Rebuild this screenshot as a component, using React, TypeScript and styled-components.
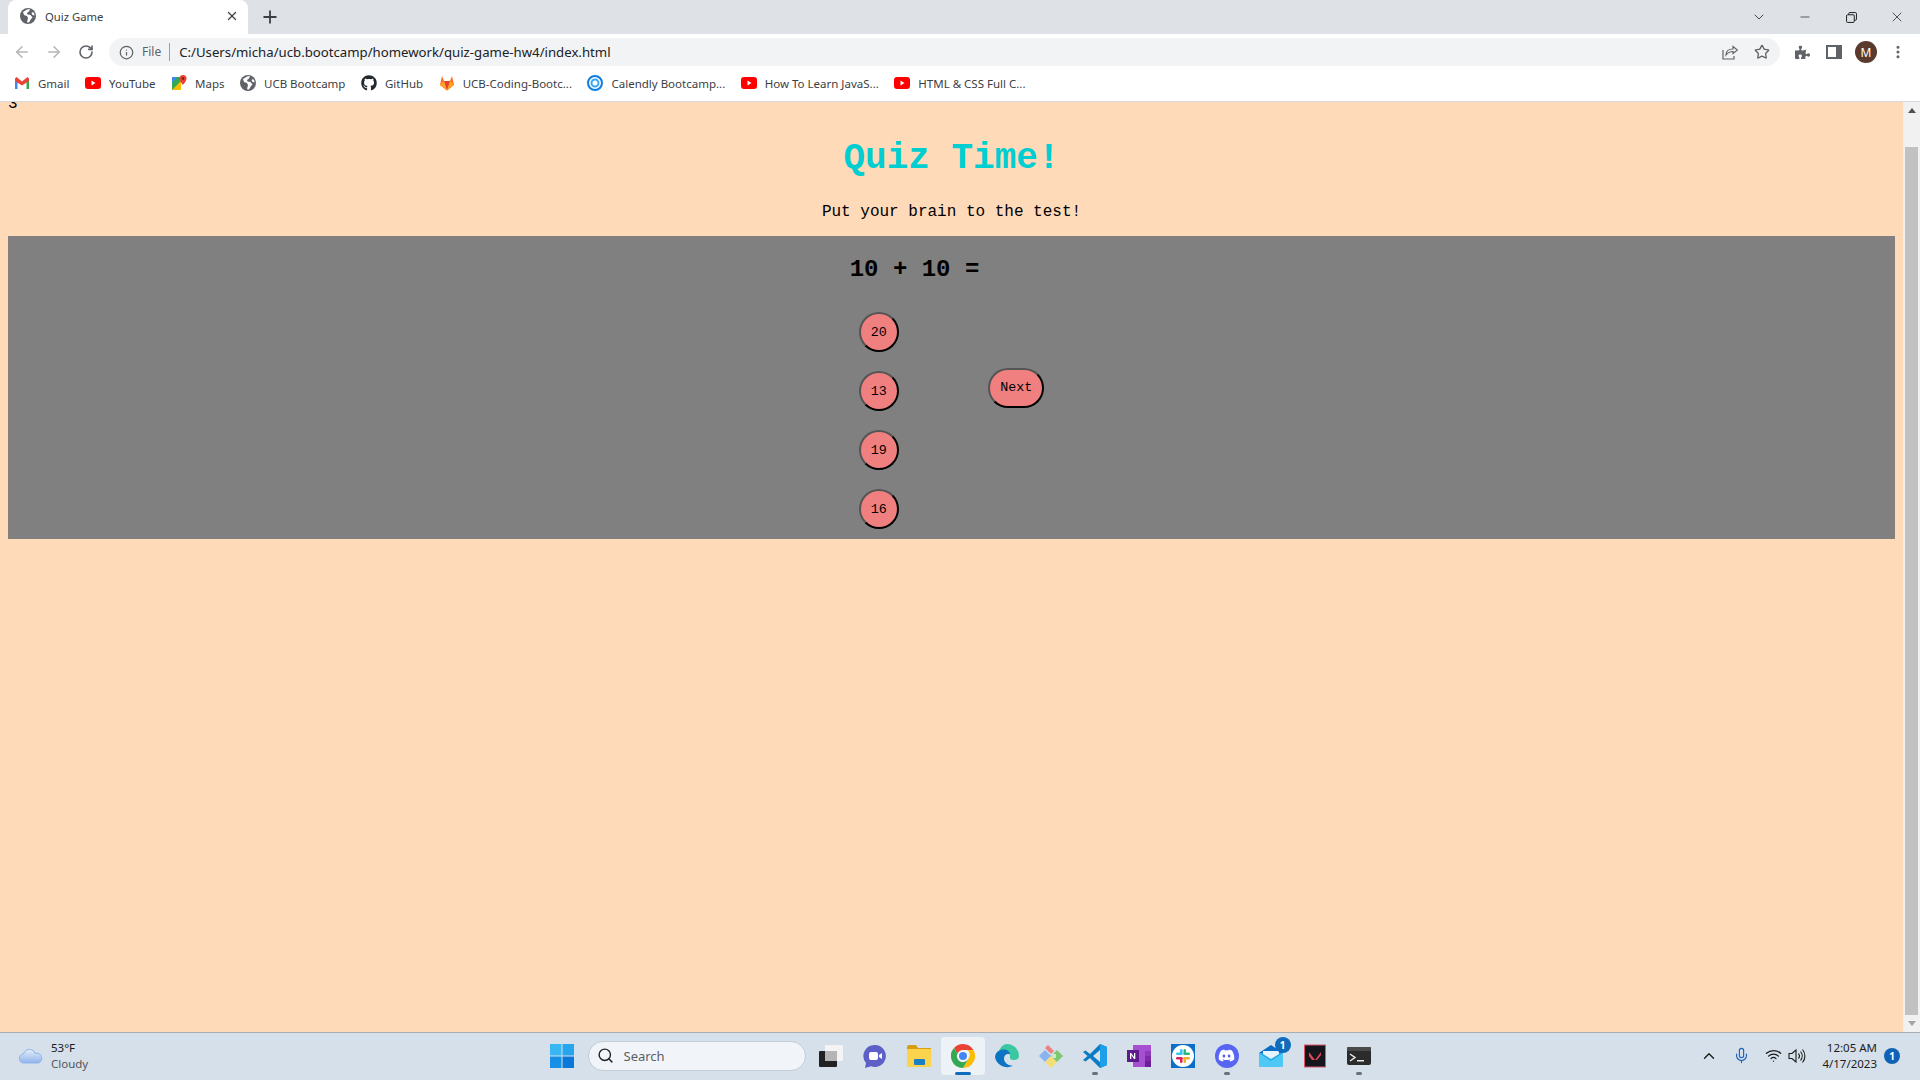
import React from 'react';
import styled, { createGlobalStyle } from 'styled-components';
import {
    ArrowLeft,
    ArrowRight,
    ChevronDown,
    ChevronUp,
    Info,
    Mic,
    Minus,
    MoreVertical,
    Plus,
    RotateCw,
    Search,
    Star,
    Wifi,
    X,
} from 'lucide-react';
import { FaDiscord, FaGithub, FaPuzzlePiece } from 'react-icons/fa';

const UI_FONT = '"Noto Sans", "Open Sans", sans-serif';
const MONO_FONT = '"Liberation Mono", monospace';

const GlobalStyle = createGlobalStyle`
    html, body {
        margin: 0;
        padding: 0;
        height: 100%;
        overflow: hidden;
    }
    * {
        box-sizing: border-box;
    }
`;

const Screen = styled.div`
    width: 1920px;
    height: 1080px;
    display: flex;
    flex-direction: column;
    overflow: hidden;
    font-family: ${UI_FONT};
`;

const TabStrip = styled.div`
    height: 34px;
    flex: none;
    display: flex;
    align-items: flex-end;
    padding-left: 8px;
    background: #dee1e6;
`;

const ActiveTab = styled.div`
    width: 240px;
    height: 34px;
    display: flex;
    align-items: center;
    gap: 9px;
    padding: 0 9px 2px 12px;
    background: #fff;
    border-radius: 8px 8px 0 0;
    color: #3c4043;
    font-size: 11.3px;
`;

const TabTitle = styled.span`
    flex: 1;
`;

const NewTab = styled.div`
    width: 36px;
    height: 34px;
    margin-left: 4px;
    display: flex;
    align-items: center;
    justify-content: center;
    color: #3c4043;
`;

const WindowControls = styled.div`
    margin-left: auto;
    height: 34px;
    display: flex;
    align-items: center;
    color: #1f1f1f;
`;

const WindowButton = styled.div`
    width: 46px;
    display: flex;
    justify-content: center;
`;

const Toolbar = styled.div`
    height: 38px;
    flex: none;
    display: flex;
    align-items: center;
    padding: 0 0 2px 6px;
    background: #fff;
`;

const NavButton = styled.div<{ $off?: boolean }>`
    width: 32px;
    display: flex;
    justify-content: center;
    color: ${(props) => (props.$off ? '#b4b6b9' : '#5f6368')};
`;

const AddressBar = styled.div`
    width: 1671px;
    height: 28px;
    margin-left: 7px;
    display: flex;
    align-items: center;
    padding: 0 2px 0 10px;
    border-radius: 14px;
    background: #f1f3f4;
    color: #5f6368;
    font-size: 12px;
`;

const SiteLabel = styled.span`
    margin-left: 8px;
    padding-right: 8px;
    border-right: 1px solid #9aa0a6;
    line-height: 18px;
`;

const UrlText = styled.span`
    margin-left: 9px;
    flex: 1;
    color: #202124;
    font-size: 13.2px;
`;

const AddressIcon = styled.div`
    width: 32px;
    display: flex;
    justify-content: center;
    color: #5f6368;
`;

const ToolbarEnd = styled.div`
    display: flex;
    align-items: center;
    margin-left: 6px;
    color: #5f6368;
`;

const ToolbarIcon = styled.div`
    width: 32px;
    display: flex;
    justify-content: center;
`;

const Avatar = styled.div`
    width: 22px;
    height: 22px;
    margin: 0 5px;
    display: flex;
    align-items: center;
    justify-content: center;
    border-radius: 50%;
    background: #5b3a2e;
    color: #fff;
    font-size: 12px;
`;

const BookmarkBar = styled.div`
    height: 30px;
    flex: none;
    display: flex;
    align-items: center;
    gap: 15.5px;
    padding: 0 0 7px 14px;
    background: #fff;
    border-bottom: 1px solid #d6d9df;
`;

const Bookmark = styled.div`
    display: flex;
    align-items: center;
    gap: 8px;
    color: #3c4043;
    font-size: 11.5px;
    white-space: nowrap;
`;

const Viewport = styled.div`
    flex: 1;
    min-height: 0;
    display: flex;
`;

const Page = styled.main`
    flex: 1;
    min-width: 0;
    overflow: hidden;
    background: #ffdab9;
    font-family: ${MONO_FONT};
    color: #000;
    text-align: center;
`;

// the page is scrolled a little, only the foot of the counter is left in view
const Timer = styled.div`
    height: 6px;
    padding-left: 8px;
    overflow: hidden;
    text-align: left;
    font-size: 16px;
    line-height: 4px;
`;

const Title = styled.h1`
    margin: 30px 0 0;
    color: #00ced1;
    font-size: 36px;
    line-height: 41px;
`;

const Tagline = styled.p`
    margin: 24px 0 0;
    font-size: 16px;
    line-height: 18px;
`;

const QuizPanel = styled.section`
    margin: 15px 8px 0;
    display: flex;
    justify-content: center;
    align-items: center;
    background: #808080;
`;

const QuestionColumn = styled.div`
    padding-bottom: 10px;
`;

const Question = styled.h2`
    margin: 20px 0;
    font-size: 24px;
    line-height: 27px;
`;

const Answers = styled.div`
    display: flex;
    flex-direction: column;
    align-items: flex-start;
    gap: 19px;
    margin: 29px 0 0 9px;
`;

const PillButton = styled.button<{ $wide?: boolean }>`
    height: 40px;
    width: ${(props) => (props.$wide ? '56px' : '40px')};
    margin: ${(props) => (props.$wide ? '0 9px' : '0')};
    padding: 0;
    border: 2px outset #000;
    border-radius: 20px;
    background: #f08080;
    color: #000;
    font-family: ${MONO_FONT};
    font-size: 13.33px;
`;

const Scrollbar = styled.div`
    width: 17px;
    flex: none;
    display: flex;
    flex-direction: column;
    background: #f1f1f1;
`;

const ScrollArrow = styled.div`
    height: 17px;
    flex: none;
    display: flex;
    align-items: center;
    justify-content: center;
`;

const ScrollTrack = styled.div`
    flex: 1;
    padding: 28px 2px 0;
`;

const ScrollThumb = styled.div`
    height: 100%;
    background: #c1c1c1;
`;

const Taskbar = styled.footer`
    height: 48px;
    flex: none;
    display: grid;
    grid-template-columns: 1fr auto 1fr;
    align-items: center;
    padding-bottom: 2px;
    background: #d5e0ea;
    border-top: 1px solid #a9adb1;
`;

const Weather = styled.div`
    display: flex;
    align-items: center;
    gap: 8px;
    padding-left: 19px;
`;

const WeatherText = styled.div`
    font-size: 11.5px;
    line-height: 16px;
    color: #1b1b1b;
`;

const WeatherSub = styled.div`
    color: #555;
`;

const TaskCenter = styled.div`
    display: flex;
    align-items: center;
`;

const TaskSlot = styled.div<{ $active?: boolean }>`
    position: relative;
    width: 44px;
    height: 38px;
    display: flex;
    align-items: center;
    justify-content: center;
    border-radius: 4px;
    background: ${(props) => (props.$active ? '#edf2f7' : 'transparent')};
`;

const RunDot = styled.span<{ $active?: boolean }>`
    position: absolute;
    left: 50%;
    bottom: 0;
    width: ${(props) => (props.$active ? '16px' : '6px')};
    height: 3px;
    margin-left: ${(props) => (props.$active ? '-8px' : '-3px')};
    border-radius: 2px;
    background: ${(props) => (props.$active ? '#0f6cbd' : '#6b7075')};
`;

const SearchBox = styled.div`
    width: 218px;
    height: 30px;
    margin: 0 3px 0 4px;
    display: flex;
    align-items: center;
    gap: 9.5px;
    padding-left: 8.5px;
    border-radius: 15px;
    border: 1px solid #c3ccd4;
    background: #f1f5f9;
    color: #5c5f62;
    font-size: 13px;
`;

const MailBadge = styled.span`
    position: absolute;
    top: 0;
    right: 2px;
    width: 16px;
    height: 16px;
    display: flex;
    align-items: center;
    justify-content: center;
    border-radius: 50%;
    background: #0f6cbd;
    color: #fff;
    font-size: 10px;
    font-weight: 700;
`;

const Tray = styled.div`
    display: flex;
    align-items: center;
    justify-content: flex-end;
    color: #1c1c1c;
`;

const TrayIcon = styled.div<{ $width: number; $blue?: boolean }>`
    width: ${(props) => props.$width}px;
    display: flex;
    justify-content: center;
    color: ${(props) => (props.$blue ? '#1f62b8' : '#1c1c1c')};
`;

const Clock = styled.div`
    margin-left: 13px;
    text-align: right;
    font-size: 11.5px;
    line-height: 16px;
`;

const NoticeBadge = styled.div`
    width: 16px;
    height: 16px;
    margin: 0 20px 0 7px;
    display: flex;
    align-items: center;
    justify-content: center;
    border-radius: 50%;
    background: #0f62b5;
    color: #fff;
    font-size: 10px;
    font-weight: 700;
`;

const GlobeIcon = () => (
    <svg width="16" height="16" viewBox="0 0 16 16">
        <circle cx="8" cy="8" r="8" fill="#5f6368" />
        <path
            d="M7 1.500 3 4l1 3 3 1 1 2-1 4.300 2 .2 2-3.500 1.500-1.500-2-2.500-3-.5-.5-1.500 2-1.500 1-2.500zM13 4l-1.500 1 1 2 2 .5-.2-2z"
            fill="#fff"
        />
    </svg>
);

const GmailIcon = () => (
    <svg width="16" height="16" viewBox="0 0 16 16">
        <path d="M1 3.500V14h2.500V6.500z" fill="#4285f4" />
        <path d="M15 3.500V14h-2.500V6.500z" fill="#34a853" />
        <path d="M1 3.500 2.500 2 8 6.500 13.500 2 15 3.500V6L8 10.500 1 6z" fill="#ea4335" />
    </svg>
);

const YouTubeIcon = () => (
    <svg width="16" height="16" viewBox="0 0 16 16">
        <rect y="2" width="16" height="12" rx="3" fill="#f00" />
        <path d="m6.500 5.500 4 2.500-4 2.500z" fill="#fff" />
    </svg>
);

const MapsIcon = () => (
    <svg width="16" height="16" viewBox="0 0 16 16">
        <path d="M1 2h9v13H1z" fill="#34a853" />
        <path d="M1 15 10 6v9z" fill="#fbbc04" />
        <path d="M1 2h5L1 8z" fill="#4285f4" />
        <path d="M12 0a3.500 3.500 0 0 1 3.500 3.500C15.500 6 12 10 12 10S8.500 6 8.500 3.500A3.500 3.500 0 0 1 12 0z" fill="#ea4335" />
        <circle cx="12" cy="3.500" r="1.200" fill="#7c1a12" />
    </svg>
);

const GitlabIcon = () => (
    <svg width="16" height="16" viewBox="0 0 16 16">
        <path d="M8 15.500 1 10 3 1l2 5h6l2-5 2 9z" fill="#fc6d26" />
        <path d="M5 6h6l-3 9.500z" fill="#e24329" />
        <path d="M1 10 5 6l3 9.500zM15 10l-4-4-3 9.500z" fill="#fca326" />
    </svg>
);

const CalendlyIcon = () => (
    <svg width="16" height="16" viewBox="0 0 16 16">
        <circle cx="8" cy="8" r="7" fill="none" stroke="#0b7de0" strokeWidth="2" />
        <circle cx="8" cy="8" r="3.500" fill="none" stroke="#39a7f5" strokeWidth="2" />
    </svg>
);

const CloudIcon = () => (
    <svg width="24" height="18" viewBox="0 0 24 18">
        <defs>
            <linearGradient id="cloud" x1="0" y1="0" x2="0" y2="1">
                <stop offset="0" stopColor="#e6eefa" />
                <stop offset="1" stopColor="#8fb4ec" />
            </linearGradient>
        </defs>
        <path
            d="M5 16a4.500 4.500 0 0 1-.5-9 6 6 0 0 1 7-4.500A5 5 0 0 1 16 6.500 5 5 0 0 1 19.500 16z"
            fill="url(#cloud)"
            stroke="#8fb4ec"
            strokeWidth="1"
        />
    </svg>
);

const WindowsIcon = () => (
    <svg width="24" height="24" viewBox="0 0 24 24">
        <rect width="11.500" height="11.500" fill="#39b7f5" />
        <rect x="12.500" width="11.500" height="11.500" fill="#26a4ec" />
        <rect y="12.500" width="11.500" height="11.500" fill="#1590e4" />
        <rect x="12.500" y="12.500" width="11.500" height="11.500" fill="#0a78d6" />
    </svg>
);

const TaskViewIcon = () => (
    <svg width="24" height="24" viewBox="0 0 24 24">
        <rect x="0" y="7" width="18" height="16" rx="1" fill="#222" />
        <rect x="6" y="1" width="18" height="16" rx="1" fill="#f4f4f4" />
        <rect x="6" y="7" width="12" height="10" fill="#b5b5b5" />
    </svg>
);

const ZoomIcon = () => (
    <svg width="24" height="24" viewBox="0 0 24 24">
        <path d="M12 1a11 11 0 1 1-4 21.300L2 24l1-5A11 11 0 0 1 12 1z" fill="#5f5fc8" />
        <rect x="6" y="8" width="9" height="8" rx="2" fill="#fff" />
        <path d="m16 11 3-2v6l-3-2z" fill="#fff" />
    </svg>
);

const ExplorerIcon = () => (
    <svg width="24" height="22" viewBox="0 0 24 22">
        <path d="M0 2a2 2 0 0 1 2-2h7l2 3h13v6H0z" fill="#d99e0e" />
        <path d="M0 4h24v18H0z" fill="#fcd34d" />
        <rect x="7" y="14" width="11" height="6" rx="1" fill="#1a7fc4" />
    </svg>
);

const ChromeIcon = () => (
    <svg width="24" height="24" viewBox="0 0 24 24">
        <path d="M12 0a12 12 0 0 1 10.400 6H12a6 6 0 0 0-5.600 3.800L3 4a12 12 0 0 1 9-4z" fill="#ea4335" />
        <path d="M22.400 6A12 12 0 0 1 12 24l5.200-9a6 6 0 0 0-1-9z" fill="#fbbc04" />
        <path d="M3 4a12 12 0 0 0 9 20l5.200-9a6 6 0 0 1-10.800-5.200z" fill="#34a853" />
        <circle cx="12" cy="12" r="5" fill="#fff" />
        <circle cx="12" cy="12" r="4" fill="#4285f4" />
    </svg>
);

const EdgeIcon = () => (
    <svg width="24" height="24" viewBox="0 0 24 24">
        <path d="M12 0a12 12 0 0 1 12 12c0 3-3 4.500-6 4-3-.5-3.500-2-3-3.500.5-2-1-4-4-4-4 0-7 3-8 6-1-6 3-14.500 9-14.500z" fill="#3bc7a0" />
        <path d="M0 13C.5 7 6 5 10 5.500c3 .5 5 2.500 5 5-3-1.500-6 .5-6 4 0 4 4 7.500 9 7A12 12 0 0 1 0 13z" fill="#0c74c4" />
    </svg>
);

const GitKrakenIcon = () => (
    <svg width="24" height="24" viewBox="0 0 24 24">
        <path d="m0 12 6-6 6 6-6 6z" fill="#8ab4f0" />
        <path d="m6 18 6-6 6 6-6 6z" fill="#f5de7a" />
        <path d="m12 12 6-6 6 6-6 6z" fill="#7ec870" />
        <path d="m6 4 3-3 6 6-3 3z" fill="#ef8080" />
        <rect x="13" y="10" width="4" height="4" fill="#fff" opacity="0.6" />
    </svg>
);

const VsCodeIcon = () => (
    <svg width="24" height="24" viewBox="0 0 24 24">
        <path d="M17 0 7 10 2.500 6.500 0 8l4.500 4L0 16l2.500 1.500L7 14l10 10 7-3V3z" fill="#0a7cc4" />
        <path d="M17 0v24l7-3V3z" fill="#1f9fe8" />
        <path d="m17 6-7 6 7 6z" fill="#d5e0ea" />
    </svg>
);

const OneNoteIcon = () => (
    <svg width="24" height="24" viewBox="0 0 24 24">
        <rect x="6" y="1" width="18" height="22" fill="#a64fd0" />
        <rect x="18" y="7" width="6" height="5" fill="#8d3bb8" />
        <rect x="18" y="12" width="6" height="5" fill="#7b2ba5" />
        <rect x="18" y="17" width="6" height="6" fill="#6b1f96" />
        <rect y="6" width="12" height="12" fill="#5c1a8a" />
        <path d="M3 15V9h1.200l2.800 4V9h1.300v6H7L4.300 11v4z" fill="#fff" />
    </svg>
);

const SlackIcon = () => (
    <svg width="24" height="24" viewBox="0 0 24 24">
        <rect width="24" height="24" fill="#0b6fc9" />
        <circle cx="12" cy="12" r="11" fill="#fff" />
        <rect x="9" y="5" width="2.500" height="6" rx="1.200" fill="#36c5f0" />
        <rect x="5" y="8.500" width="6.500" height="2.500" rx="1.200" fill="#36c5f0" />
        <rect x="12.500" y="5" width="2.500" height="6" rx="1.200" fill="#2eb67d" />
        <rect x="12.500" y="8.500" width="6.500" height="2.500" rx="1.200" fill="#2eb67d" />
        <rect x="12.500" y="13" width="2.500" height="6" rx="1.200" fill="#ecb22e" />
        <rect x="12.500" y="13" width="6.500" height="2.500" rx="1.200" fill="#ecb22e" />
        <rect x="9" y="13" width="2.500" height="6" rx="1.200" fill="#e01e5a" />
        <rect x="5" y="13" width="6.500" height="2.500" rx="1.200" fill="#e01e5a" />
    </svg>
);

const DiscordBubble = styled.div`
    width: 24px;
    height: 24px;
    display: flex;
    align-items: center;
    justify-content: center;
    border-radius: 50%;
    background: #5865f2;
    color: #fff;
`;

const MailIcon = () => (
    <svg width="24" height="24" viewBox="0 0 24 24">
        <path d="M0 9 12 1l12 8v14H0z" fill="#0a6cc2" />
        <path d="M0 9h24v14H0z" fill="#28a8ea" />
        <path d="m0 9 12 8 12-8v14H0z" fill="#50c8f5" />
        <path d="M4 7h16v3l-8 5-8-5z" fill="#e8f4fb" />
    </svg>
);

const ValorantIcon = () => (
    <svg width="22" height="24" viewBox="0 0 22 24">
        <rect x="0.500" y="1" width="21" height="22" fill="#15151c" stroke="#e0566a" />
        <path d="m5 8 6 8H8L5 12zM17 8v3l-4 5h-2z" fill="#e0455a" />
    </svg>
);

const TerminalIcon = () => (
    <svg width="24" height="18" viewBox="0 0 24 18">
        <rect width="24" height="18" rx="2" fill="#2b2b2b" />
        <rect width="24" height="4" rx="1" fill="#4a4a4a" />
        <path d="m3 7 5 3.500L3 14" fill="none" stroke="#e8e8e8" strokeWidth="1.500" />
        <rect x="10" y="13" width="7" height="1.500" fill="#e8e8e8" />
    </svg>
);

const ShareIcon = () => (
    <svg width="16" height="16" viewBox="0 0 16 16" fill="none" stroke="currentColor" strokeWidth="1.200">
        <path d="M1 6v9h11v-3" />
        <path d="M4 11c0-4 3-6 7-6V2.500L15.500 6 11 9.500V7.500C8 7.500 6 8.500 4 11z" />
    </svg>
);

const SidePanelIcon = () => (
    <svg width="16" height="16" viewBox="0 0 16 16">
        <path d="M0 1h16v14H0zm2 2v10h8V3z" fill="currentColor" fillRule="evenodd" />
    </svg>
);

const RestoreIcon = () => (
    <svg width="11" height="11" viewBox="0 0 10 10" fill="none" stroke="currentColor" strokeWidth="0.900">
        <rect x="0.500" y="2.500" width="7" height="7" rx="1" />
        <path d="M2.500 2.500v-1a1 1 0 0 1 1-1h5a1 1 0 0 1 1 1v5a1 1 0 0 1-1 1h-1" />
    </svg>
);

const SpeakerIcon = () => (
    <svg width="18" height="16" viewBox="0 0 18 16" fill="none" stroke="currentColor" strokeWidth="1.100">
        <path d="M1 5.500h3L8 2v12l-4-3.500H1z" />
        <path d="M10.500 5.500a4 4 0 0 1 0 5M12.500 3.500a7 7 0 0 1 0 9M14.500 1.500a10 10 0 0 1 0 13" />
    </svg>
);

const ScrollTriangle = ({ down }: { down?: boolean }) => (
    <svg width="8" height="5" viewBox="0 0 8 5">
        <path d={down ? 'M0 0h8L4 5z' : 'M4 0l4 5H0z'} fill={down ? '#a3a3a3' : '#505050'} />
    </svg>
);

const bookmarks = [
    { label: 'Gmail', icon: <GmailIcon /> },
    { label: 'YouTube', icon: <YouTubeIcon /> },
    { label: 'Maps', icon: <MapsIcon /> },
    { label: 'UCB Bootcamp', icon: <GlobeIcon /> },
    { label: 'GitHub', icon: <FaGithub size={16} color="#24292e" /> },
    { label: 'UCB-Coding-Bootc...', icon: <GitlabIcon /> },
    { label: 'Calendly Bootcamp...', icon: <CalendlyIcon /> },
    { label: 'How To Learn JavaS...', icon: <YouTubeIcon /> },
    { label: 'HTML & CSS Full C...', icon: <YouTubeIcon /> },
];

const answers = ['20', '13', '19', '16'];

export default function App() {
    return (
        <Screen>
            <GlobalStyle />
            <TabStrip>
                <ActiveTab>
                    <GlobeIcon />
                    <TabTitle>Quiz Game</TabTitle>
                    <X size={14} strokeWidth={2.2} />
                </ActiveTab>
                <NewTab>
                    <Plus size={20} strokeWidth={2.2} />
                </NewTab>
                <WindowControls>
                    <WindowButton>
                        <ChevronDown size={16} strokeWidth={1.2} />
                    </WindowButton>
                    <WindowButton>
                        <Minus size={14} strokeWidth={1.2} />
                    </WindowButton>
                    <WindowButton>
                        <RestoreIcon />
                    </WindowButton>
                    <WindowButton>
                        <X size={16} strokeWidth={1.1} />
                    </WindowButton>
                </WindowControls>
            </TabStrip>
            <Toolbar>
                <NavButton $off>
                    <ArrowLeft size={18} />
                </NavButton>
                <NavButton $off>
                    <ArrowRight size={18} />
                </NavButton>
                <NavButton>
                    <RotateCw size={16} strokeWidth={2.4} />
                </NavButton>
                <AddressBar>
                    <Info size={15} />
                    <SiteLabel>File</SiteLabel>
                    <UrlText>C:/Users/micha/ucb.bootcamp/homework/quiz-game-hw4/index.html</UrlText>
                    <AddressIcon>
                        <ShareIcon />
                    </AddressIcon>
                    <AddressIcon>
                        <Star size={16} strokeWidth={2} />
                    </AddressIcon>
                </AddressBar>
                <ToolbarEnd>
                    <ToolbarIcon>
                        <FaPuzzlePiece size={15} />
                    </ToolbarIcon>
                    <ToolbarIcon>
                        <SidePanelIcon />
                    </ToolbarIcon>
                    <Avatar>M</Avatar>
                    <ToolbarIcon>
                        <MoreVertical size={16} strokeWidth={2.6} />
                    </ToolbarIcon>
                </ToolbarEnd>
            </Toolbar>
            <BookmarkBar>
                {bookmarks.map((item) => (
                    <Bookmark key={item.label}>
                        {item.icon}
                        {item.label}
                    </Bookmark>
                ))}
            </BookmarkBar>
            <Viewport>
                <Page>
                    <Timer>3</Timer>
                    <Title>Quiz Time!</Title>
                    <Tagline>Put your brain to the test!</Tagline>
                    <QuizPanel>
                        <QuestionColumn>
                            <Question>10 + 10 =</Question>
                            <Answers>
                                {answers.map((answer) => (
                                    <PillButton key={answer}>{answer}</PillButton>
                                ))}
                            </Answers>
                        </QuestionColumn>
                        <PillButton $wide>Next</PillButton>
                    </QuizPanel>
                </Page>
                <Scrollbar>
                    <ScrollArrow>
                        <ScrollTriangle />
                    </ScrollArrow>
                    <ScrollTrack>
                        <ScrollThumb />
                    </ScrollTrack>
                    <ScrollArrow>
                        <ScrollTriangle down />
                    </ScrollArrow>
                </Scrollbar>
            </Viewport>
            <Taskbar>
                <Weather>
                    <CloudIcon />
                    <WeatherText>
                        53°F
                        <WeatherSub>Cloudy</WeatherSub>
                    </WeatherText>
                </Weather>
                <TaskCenter>
                    <TaskSlot>
                        <WindowsIcon />
                    </TaskSlot>
                    <SearchBox>
                        <Search size={17} color="#222" strokeWidth={2} />
                        Search
                    </SearchBox>
                    <TaskSlot>
                        <TaskViewIcon />
                    </TaskSlot>
                    <TaskSlot>
                        <ZoomIcon />
                    </TaskSlot>
                    <TaskSlot>
                        <ExplorerIcon />
                    </TaskSlot>
                    <TaskSlot $active>
                        <ChromeIcon />
                        <RunDot $active />
                    </TaskSlot>
                    <TaskSlot>
                        <EdgeIcon />
                    </TaskSlot>
                    <TaskSlot>
                        <GitKrakenIcon />
                    </TaskSlot>
                    <TaskSlot>
                        <VsCodeIcon />
                        <RunDot />
                    </TaskSlot>
                    <TaskSlot>
                        <OneNoteIcon />
                    </TaskSlot>
                    <TaskSlot>
                        <SlackIcon />
                    </TaskSlot>
                    <TaskSlot>
                        <DiscordBubble>
                            <FaDiscord size={17} />
                        </DiscordBubble>
                        <RunDot />
                    </TaskSlot>
                    <TaskSlot>
                        <MailIcon />
                        <MailBadge>1</MailBadge>
                    </TaskSlot>
                    <TaskSlot>
                        <ValorantIcon />
                    </TaskSlot>
                    <TaskSlot>
                        <TerminalIcon />
                        <RunDot />
                    </TaskSlot>
                </TaskCenter>
                <Tray>
                    <TrayIcon $width={24}>
                        <ChevronUp size={18} strokeWidth={1.8} />
                    </TrayIcon>
                    <TrayIcon $width={40} $blue>
                        <Mic size={17} strokeWidth={1.6} />
                    </TrayIcon>
                    <TrayIcon $width={24}>
                        <Wifi size={17} strokeWidth={1.8} />
                    </TrayIcon>
                    <TrayIcon $width={24}>
                        <SpeakerIcon />
                    </TrayIcon>
                    <Clock>
                        12:05 AM
                        <br />
                        4/17/2023
                    </Clock>
                    <NoticeBadge>1</NoticeBadge>
                </Tray>
            </Taskbar>
        </Screen>
    );
}
